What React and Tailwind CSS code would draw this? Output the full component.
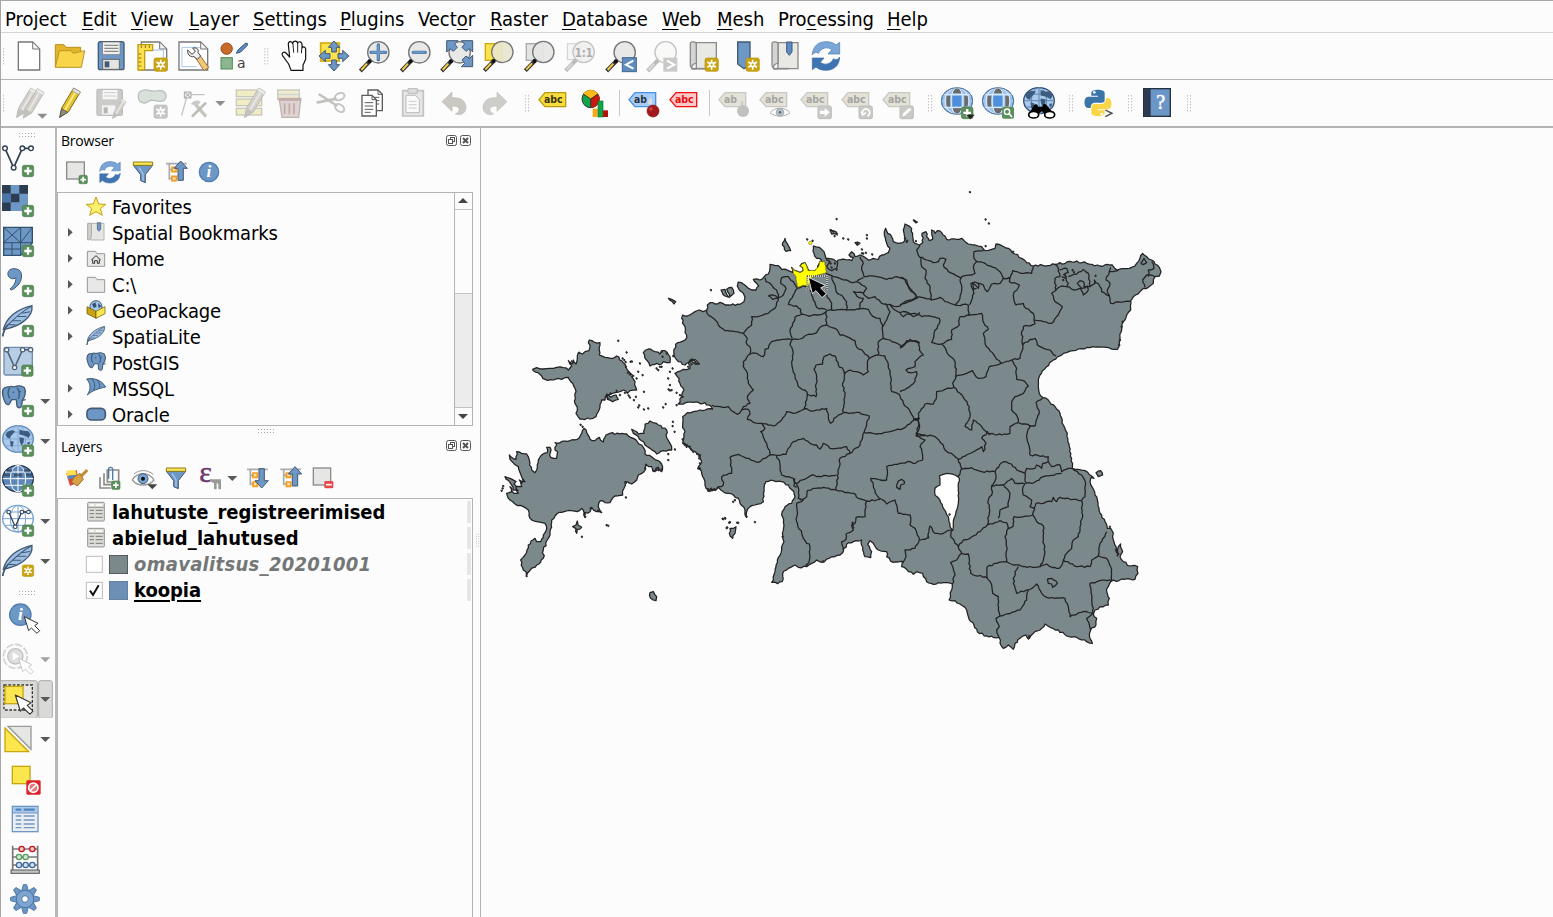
import React from "react";

const BLUE = "#6d97c4";
const NAVY = "#415a75";

/* ---------- shared drawing pieces (3 units = 1 px) ---------- */

function Cell({ x, y, w = 123, h = 141, children, className = "" }) {
  return (
    <svg className={`block shrink-0 ${className}`} width={w / 3} height={h / 3} viewBox={`${x} ${y} ${w} ${h}`}>
      {children}
    </svg>
  );
}
const Plus = ({ x, y, s = 36 }) => (
  <g transform={`translate(${x} ${y}) scale(${s / 36})`}>
    <rect x="1" y="1" width="34" height="34" rx="6" fill="#5b8f5b" stroke="#4a7d4c" strokeWidth="2" />
    <path d="M18 7V29M7 18H29" stroke="#fff" strokeWidth="7" />
  </g>
);
const Star = ({ x, y, s = 42, grey }) => (
  <g transform={`translate(${x} ${y}) scale(${s / 42})`}>
    <rect x="1" y="1" width="40" height="40" rx="6" fill={grey ? "#c6c6c4" : "#c9a413"} stroke={grey ? "#bbb" : "#b8940a"} strokeWidth="2" />
    <path d="M21 6V36M8 13L34 29M34 13L8 29" stroke="#fff" strokeWidth="5" />
    <circle cx="21" cy="21" r="8" fill="#fff" />
    <circle cx="21" cy="21" r="3.5" fill={grey ? "#c6c6c4" : "#c9a413"} />
  </g>
);
const Down = ({ x, y, c = "#595959" }) => <path d={`M${x - 15} ${y - 6}H${x + 15}L${x} ${y + 9}Z`} fill={c} />;
const Lens = ({ cx, cy, grey, fill = "#e6e6e4", children }) => (
  <g>
    <path d={`M${cx - 24} ${cy + 25}L${cx - 54} ${cy + 56}`} stroke={grey ? "#b9b9b9" : "#333"} strokeWidth="12" />
    <path d={`M${cx - 34} ${cy + 34}L${cx - 51} ${cy + 53}`} stroke={grey ? "#dcdcd8" : "#f5ce4a"} strokeWidth="6" />
    <circle cx={cx} cy={cy} r="32" fill={fill} fillOpacity=".9" stroke={grey ? "#c4c4c4" : "#777"} strokeWidth="4" />
    <circle cx={cx - 26} cy={cy + 27} r="6" fill={grey ? "#bbb" : "#111"} />
    {children}
  </g>
);
const Pointer = ({ x, y, s = 1, stroke = "#333", fill = "#fff" }) => (
  <path transform={`translate(${x} ${y}) scale(${s})`} d="M0 0L13 42L21 34L38 50L46 42L31 27L41 20Z" fill={fill} stroke={stroke} strokeWidth="3" strokeLinejoin="round" />
);
const Dots = ({ x, y, cols, rows }) => {
  const out = [];
  for (let i = 0; i < cols; i++) for (let j = 0; j < rows; j++) out.push(<rect key={`${i}-${j}`} x={x + i * 9} y={y + j * 9} width="3" height="3" fill="#a9a9a9" />);
  return <g>{out}</g>;
};
const Refresh = ({ x, y, s = 1 }) => (
  <g transform={`translate(${x} ${y}) scale(${s})`}>
    <path d="M-41 -3C-40 -30 -22 -43 0 -43C14 -43 24 -39 30 -33L41 -41V-6H6L17 -19C6 -29 -16 -25 -22 -8C-28 -12 -36 -12 -41 -3Z" fill="#79a6d6" stroke="#4677ac" strokeWidth="2" />
    <path d="M41 3C40 30 22 43 0 43C-14 43 -24 39 -30 33L-41 41V6H-6L-17 19C-6 29 16 25 22 8C28 12 36 12 41 3Z" fill="#3f74b2" stroke="#3a6aa2" strokeWidth="2" />
  </g>
);
const Globe = ({ cx, cy, rx = 46, ry = 40, dark, fill = "#a9c8ea", line = "#5b87b8" }) => (
  <g>
    <ellipse cx={cx} cy={cy} rx={rx} ry={ry} fill={fill} stroke={dark || line} strokeWidth="4" />
    <g fill="none" stroke={line} strokeWidth="3">
      <ellipse cx={cx} cy={cy} rx={rx * 0.5} ry={ry} />
      <path d={`M${cx} ${cy - ry}V${cy + ry}M${cx - rx} ${cy}H${cx + rx}M${cx - rx * 0.85} ${cy - ry * 0.5}H${cx + rx * 0.85}M${cx - rx * 0.85} ${cy + ry * 0.5}H${cx + rx * 0.85}`} />
    </g>
  </g>
);
const Continents = ({ cx, cy, s = 1 }) => (
  <g transform={`translate(${cx} ${cy}) scale(${s})`} fill="#3c5b80">
    <path d="M-36 -12L-30 -20L-20 -24L-8 -22L-14 -14L-20 -8L-24 0L-32 -4Z" />
    <path d="M-22 6L-12 9L-16 24L-21 20Z" />
    <path d="M4 -26L16 -22L28 -22L36 -12L30 -2L24 -6L14 -10L4 -12Z" />
    <path d="M4 -4L17 -2L16 10L10 20L5 8Z" />
    <path d="M27 10L35 9L32 17L27 17Z" />
  </g>
);
const WebGlobe = ({ cx }) => (
  <g>
    <ellipse cx={cx} cy="303" rx="47" ry="40" fill="#9dc3ee" stroke="#4f7db1" strokeWidth="3" />
    <path d={`M${cx - 8} 264H${cx + 8}L${cx + 14} 280H${cx - 14}ZM${cx - 14} 325H${cx + 14}L${cx + 6} 341H${cx - 6}ZM${cx - 32} 287H${cx - 20}V320H${cx - 32}ZM${cx + 22} 287H${cx + 34}V320H${cx + 22}Z`} fill="#6b6b6b" />
    <path d={`M${cx - 14} 287H${cx + 13}V320H${cx - 14}Z`} fill="#4d8fdc" />
    <g fill="none" stroke="#e2effc" strokeWidth="3">
      <ellipse cx={cx} cy="303" rx="18" ry="40" />
      <ellipse cx={cx} cy="303" rx="36" ry="40" />
      <path d={`M${cx - 42} 284H${cx + 42}M${cx - 42} 322H${cx + 42}`} />
    </g>
    <ellipse cx={cx} cy="303" rx="47" ry="40" fill="none" stroke="#5a7da3" strokeWidth="3" />
  </g>
);
const Tag = ({ x, fill, stroke, color, t = "abc" }) => (
  <g>
    <path d={`M${x} 299L${x + 18} 278H${x + 80}V320H${x + 18}Z`} fill={fill} stroke={stroke} strokeWidth="4" />
    <text x={x + 15} y="309" fontFamily="DejaVu Sans" fontWeight="bold" fontSize="29" textLength={t === "abc" ? 56 : 39} lengthAdjust="spacingAndGlyphs" fill={color}>{t}</text>
  </g>
);
const GreyTag = ({ x, t }) => <Tag x={x} t={t} fill="#e4e2d6" stroke="#c8c8c4" color="#a5a5a2" />;
const Feather = ({ x, y, s = 1 }) => (
  <g transform={`translate(${x} ${y}) scale(${s})`}>
    <path d="M6 72C10 54 18 42 34 28C52 14 72 6 90 2C92 18 84 34 68 46C54 58 34 66 16 70Z" fill="#9dbfe3" stroke={NAVY} strokeWidth="4" />
    <path d="M4 92C6 80 10 68 20 58C40 38 62 18 88 4M34 46L58 46M48 34L74 34M62 24L84 20M22 58L42 58" fill="none" stroke={NAVY} strokeWidth="3" />
    <path d="M4 92C6 80 10 68 20 58" fill="none" stroke={NAVY} strokeWidth="5" />
  </g>
);
const Elephant = ({ x, y, s = 1 }) => (
  <g transform={`translate(${x} ${y}) scale(${s})`} stroke={NAVY} strokeWidth="4" strokeLinejoin="round">
    <path d="M22 6C4 4 0 16 4 34C8 50 14 62 22 58C26 54 28 48 30 44H44L46 64C50 70 58 70 60 62L62 46C70 36 74 20 68 8C58 0 46 2 36 6C30 2 26 4 22 6Z" fill={BLUE} />
    <path d="M24 8C18 18 18 30 24 40M46 8C54 16 54 30 50 42M62 46L72 44M34 20L36 24M56 18V22" fill="none" />
  </g>
);
const Funnel = ({ x, y }) => (
  <g transform={`translate(${x} ${y})`}>
    <path d="M-29 -20H29L7 8V32L-7 26V8Z" fill={BLUE} stroke={NAVY} strokeWidth="3" />
    <path d="M-29 -30H29V-20H-29Z" fill="#fbe94e" stroke="#8a7a20" strokeWidth="3" />
    <path d="M-12 -14L0 6V26" stroke="#a8c6e6" strokeWidth="4" fill="none" />
  </g>
);
const TreeArrow = ({ x, y, up }) => (
  <g transform={`translate(${x} ${y})`}>
    <path d="M-32 -24H30M-22 -24V24M-22 -6H-12M-22 20H-12" stroke="#aaa" strokeWidth="5" fill="none" />
    <path d="M-14 -13H-1V0H-14ZM-14 14H-1V27H-14Z" fill="#ffe0b0" stroke="#f39a1b" strokeWidth="5" />
    <path transform={up ? "" : "scale(1 -1)"} d="M12 -32L32 -10H20V26H4V-10H-8Z" fill={BLUE} stroke={NAVY} strokeWidth="3" />
  </g>
);
const Info = ({ x, y, r = 29 }) => (
  <g>
    <circle cx={x} cy={y} r={r} fill={BLUE} stroke="#4d7db3" strokeWidth="4" />
    <text x={x} y={y + 16} textAnchor="middle" fontFamily="Liberation Serif" fontStyle="italic" fontWeight="bold" fontSize="52" fill="#fff">i</text>
  </g>
);
const Pencil = ({ x, y, grey, s = 1 }) => (
  <g transform={`translate(${x} ${y}) scale(${s})`}>
    <path d="M0 88L6 60L42 0L62 12L26 72Z" fill={grey ? "#d3d0cb" : "#e3c02c"} stroke={grey ? "#bdbab6" : "#7d6d24"} strokeWidth="3" />
    <path d="M16 66L50 8" stroke={grey ? "#e8e6e2" : "#fbea88"} strokeWidth="6" />
    <path d="M42 0L62 12L58 20L38 8Z" fill={grey ? "#eee" : "#e9e9e9"} stroke={grey ? "#c9c9c9" : "#888"} strokeWidth="2" />
    <path d="M0 88L6 62L24 73Z" fill={grey ? "#c4c2be" : "#8b8b80"} stroke={grey ? "#bbb" : "#444"} strokeWidth="2" />
  </g>
);

/* ---------- main toolbars ---------- */

const Page = ({ x, w = 64, fill = "#fff" }) => (
  <g>
    <path d={`M${x} 126H${x + w - 21}L${x + w} 147V210H${x}Z`} fill={fill} stroke="#777" strokeWidth="4" />
    <path d={`M${x + w - 21} 126V147H${x + w}Z`} fill="#f4f4f4" stroke="#777" strokeWidth="3" />
  </g>
);
const PaperRoll = ({ x, s = 1, y = 0 }) => (
  <g transform={`translate(${x} ${y}) scale(${s})`}>
    <path d="M18 128H78V206H18Z" fill="#e8e8e5" stroke="#8b8b8b" strokeWidth="4" />
    <path d="M0 130C0 124 18 124 18 132V190C10 190 4 196 4 206H18C8 210 0 204 0 196Z" fill="#d4d4d2" stroke="#8b8b8b" strokeWidth="4" />
    <path d="M4 206H50" stroke="#8b8b8b" strokeWidth="5" />
  </g>
);
const PanArrow = ({ r }) => <path transform={`translate(1002 168) rotate(${r})`} d="M-7 -12V-26H-17L0 -45L17 -26H7V-12Z" fill={BLUE} stroke={NAVY} strokeWidth="3" />;
const CornerArrow = ({ x, y, r }) => <path transform={`translate(${x} ${y}) rotate(${r})`} d="M-16 -16H18L8 -6L16 4L4 16L-6 8L-16 18Z" fill={BLUE} stroke={NAVY} strokeWidth="3" />;

function FileToolbar() {
  const c = { y: 99 };
  return (
    <div className="flex h-[47px] shrink-0 border-b border-[#b4b4b4]">
      <Cell {...c} x={3} w={24}><Dots x={9} y={145} cols={1} rows={6} /></Cell>
      <Cell {...c} x={27}><Page x={55} /></Cell>
      <Cell {...c} x={150}>
        <path d="M166 200V134H192L198 142H242V200Z" fill="#e3b52a" stroke="#b98f1c" strokeWidth="3" />
        <path d="M166 202L178 152H212L220 160L254 152L244 202Z" fill="#f9d549" stroke="#b9962b" strokeWidth="3" />
      </Cell>
      <Cell {...c} x={273}>
        <rect x="295" y="125" width="77" height="84" rx="6" fill={BLUE} stroke={NAVY} strokeWidth="4" />
        <rect x="308" y="126" width="52" height="38" fill="#efefed" stroke="#777" strokeWidth="2" />
        <path d="M313 136H355M313 145H355M313 154H355" stroke="#8a8a8a" strokeWidth="4" />
        <rect x="308" y="178" width="50" height="30" fill="#e4e4e2" stroke="#666" strokeWidth="3" />
        <rect x="314" y="184" width="14" height="18" fill={NAVY} />
      </Cell>
      <Cell {...c} x={396}>
        <Page x={424} w={76} /><path d="M458 150H490V180" stroke="#9fc1e8" strokeWidth="3" fill="none" />
        <path d="M414 134H458V152H434V210H414Z" fill="#fce14e" stroke="#c29b12" strokeWidth="4" />
        <path d="M424 136V144M436 136V144M448 136V144M416 162H424M416 174H424M416 186H424M416 198H424" stroke="#8a6c10" strokeWidth="3" />
        <Star x={461} y={173} />
      </Cell>
      <Cell {...c} x={519}>
        <Page x={537} w={86} /><path d="M546 142H600M546 142V200H590" stroke="#a9c8ea" strokeWidth="3" fill="none" />
        <path d="M586 172L612 212L626 202L598 164Z" fill="#f2c67a" stroke="#96722e" strokeWidth="3" />
        <path d="M563 150C561 162 570 172 582 170L592 178L602 168L594 158C598 146 588 142 578 144L586 154L576 163Z" fill="#f0f0f0" stroke="#444" strokeWidth="3" />
      </Cell>
      <Cell {...c} x={642}>
        <circle cx="680" cy="146" r="17" fill="#cb6a28" stroke="#8f4a1c" strokeWidth="3" />
        <rect x="663" y="173" width="34" height="34" fill="#8db58f" stroke="#4d8a56" strokeWidth="3" />
        <path d="M709 160L714 150L736 130H742V136L722 156Z" fill="#5b8cc5" stroke="#34557c" strokeWidth="3" />
        <text x="711" y="203" fontFamily="DejaVu Sans" fontSize="42" fill="#444">a</text>
      </Cell>
      <Cell {...c} x={765} w={54}><Dots x={793} y={145} cols={2} rows={6} /></Cell>
      <Cell {...c} x={819}>
        <path d="M873 211L866 192L847 166C844 158 852 153 858 159L869 171L865 133C865 123 876 122 878 131C880 121 892 121 893 130C896 122 906 125 906 134L907 143C911 138 918 142 917 149V178L909 196V211Z" fill="#fff" stroke="#111" strokeWidth="3.6" strokeLinejoin="round" />
        <path d="M879 132L881 158M893 132V158M906 140L904 160" fill="none" stroke="#222" strokeWidth="3" />
      </Cell>
      <Cell {...c} x={942}>
        <rect x="962" y="129" width="56" height="54" fill="#fbe34b" stroke="#d6ab10" strokeWidth="5" />
        {[0, 90, 180, 270].map((r) => <PanArrow key={r} r={r} />)}
      </Cell>
      <Cell {...c} x={1065}><Lens cx={1135} cy={157}><path d="M1135 135V179M1113 157H1157" stroke="#4f7aab" strokeWidth="10" strokeLinecap="round" /><path d="M1135 136V178M1114 157H1156" stroke={BLUE} strokeWidth="6" /></Lens></Cell>
      <Cell {...c} x={1188}><Lens cx={1258} cy={157}><path d="M1240 157H1276" stroke="#4f7aab" strokeWidth="10" strokeLinecap="round" /><path d="M1240 157H1276" stroke={BLUE} strokeWidth="6" /></Lens></Cell>
      <Cell {...c} x={1311}>
        <Lens cx={1379} cy={157} />
        <CornerArrow x={1356} y={138} r={0} /><CornerArrow x={1402} y={138} r={90} /><CornerArrow x={1402} y={184} r={180} />
      </Cell>
      <Cell {...c} x={114}><rect x="136" y="131" width="50" height="50" fill="#fbe34b" stroke="#d0a812" strokeWidth="4" /><Lens cx={187} cy={156} fill="#e8e6cf" /></Cell>
      <Cell {...c} x={237}><rect x="259" y="131" width="50" height="50" fill="#e3e5e2" stroke="#aaa" strokeWidth="4" /><Lens cx={310} cy={156} /></Cell>
      <Cell {...c} x={360}>
        <rect x="382" y="131" width="40" height="48" fill="#f5f5f5" stroke="#d0d0d0" strokeWidth="3" /><Lens cx={431} cy={156} grey fill="#f0f0ee" />
        <text x="404" y="170" fontFamily="DejaVu Sans" fontWeight="bold" fontSize="36" textLength="54" lengthAdjust="spacingAndGlyphs" fill="#ababab">1:1</text>
      </Cell>
      <Cell {...c} x={483}><Lens cx={554} cy={157} /><rect x="547" y="173" width="42" height="42" fill="#5f8cbd" stroke="#43688f" strokeWidth="3" /><path d="M580 182L558 194L580 206" stroke="#fff" strokeWidth="6" fill="none" /></Cell>
      <Cell {...c} x={606}><Lens cx={677} cy={157} grey fill="#f8f8f7" /><rect x="670" y="173" width="42" height="42" fill="#c9c9c7" /><path d="M681 182L703 194L681 206" stroke="#fff" strokeWidth="6" fill="none" /></Cell>
      <Cell {...c} x={729}><PaperRoll x={751} /><Star x={794} y={173} /></Cell>
      <Cell {...c} x={852}><path d="M893 126H930V194L912 206L893 192Z" fill={BLUE} stroke={NAVY} strokeWidth="4" /><Star x={917} y={173} /></Cell>
      <Cell {...c} x={975}><PaperRoll x={996} /><path d="M1040 126H1056V156L1048 166L1040 156Z" fill="#5a8bc4" stroke={NAVY} strokeWidth="3" /></Cell>
      <Cell {...c} x={1098}><Refresh x={1158} y={168} /></Cell>
    </div>
  );
}

const Doc = ({ x, y }) => (
  <g>
    <path d={`M${x} ${y}H${x + 30}L${x + 43} ${y + 13}V${y + 62}H${x}Z`} fill="#fff" stroke="#5c5c5c" strokeWidth="4" />
    <path d={`M${x + 30} ${y}V${y + 13}H${x + 43}M${x + 8} ${y + 22}H${x + 34}M${x + 8} ${y + 32}H${x + 34}M${x + 8} ${y + 42}H${x + 34}M${x + 8} ${y + 51}H${x + 26}`} fill="none" stroke="#5c5c5c" strokeWidth="3" />
  </g>
);
const Badge = ({ x, children }) => (
  <g><rect x={x} y="318" width="40" height="38" rx="5" fill="#c9c9c7" stroke="#bcbcba" strokeWidth="3" />{children}</g>
);

function EditToolbar() {
  const c = { y: 240 };
  return (
    <div className="flex h-[48px] shrink-0 overflow-hidden border-b-2 border-[#b4b4b4]">
      <Cell {...c} x={3} w={24}><Dots x={9} y={286} cols={1} rows={6} /></Cell>
      <Cell {...c} x={27}><Pencil x={50} y={264} grey /><Pencil x={70} y={266} grey /><Down x={127} y={347} c="#8d8d8d" /></Cell>
      <Cell {...c} x={150}><Pencil x={179} y={264} /></Cell>
      <Cell {...c} x={273}>
        <rect x="291" y="268" width="76" height="78" rx="5" fill="#cbcbc9" stroke="#bdbdbb" strokeWidth="4" />
        <rect x="308" y="270" width="44" height="28" fill="#f7f7f7" /><path d="M312 278H348M312 288H348" stroke="#ccc" strokeWidth="3" />
        <rect x="306" y="316" width="40" height="28" fill="#f4f4f4" /><rect x="311" y="322" width="12" height="18" fill="#b5b5b5" />
        <Pencil x={338} y={298} s={0.65} grey />
      </Cell>
      <Cell {...c} x={396}>
        <path d="M415 292C412 272 432 266 450 272C468 278 476 266 490 274C504 284 500 304 480 304C462 304 456 296 446 304C434 314 416 308 415 292Z" fill="#d9e0da" stroke="#bcc0bc" strokeWidth="4" />
        <Star x={461} y={314} grey />
      </Cell>
      <Cell {...c} x={519} w={174}>
        <path d="M545 346L562 284H614" fill="none" stroke="#c4c4c2" strokeWidth="4" />
        <path d="M553 276H573V294H553ZM553 276L573 294M573 276L553 294" fill="#eee" stroke="#a9a9a7" strokeWidth="3" />
        <path d="M584 310L618 350" stroke="#c8c6c0" strokeWidth="10" /><path d="M618 308L576 350" stroke="#bdbbb6" strokeWidth="8" /><path d="M572 312C584 298 596 300 602 306L592 318Z" fill="#c9c9c9" />
        <Down x={661} y={309} c="#8d8d8d" />
      </Cell>
      <Cell {...c} x={693}>
        {[270, 297, 325].map((y) => <rect key={y} x="709" y={y} width="76" height="20" fill="#efecc6" stroke="#c9c8b8" strokeWidth="4" />)}
        <Pencil x={734} y={264} grey />
      </Cell>
      <Cell {...c} x={816}>
        <path d="M833 270H898V298H833Z" fill="#ece9d0" stroke="#cccabc" strokeWidth="4" /><path d="M833 284H898" stroke="#ccc" strokeWidth="3" />
        <path d="M838 298H902L896 352H846Z" fill="#dfd3d1" stroke="#bfb3b1" strokeWidth="4" /><path d="M836 298H904" stroke="#c0aeac" strokeWidth="9" />
        <path d="M854 310V342M868 310V342M882 310V342" stroke="#c0aaa8" strokeWidth="5" />
      </Cell>
      <Cell {...c} x={939}>
        <path d="M956 282L1012 318M950 308L1010 296" stroke="#c2c2c0" strokeWidth="8" />
        <ellipse cx="1019" cy="290" rx="15" ry="10" transform="rotate(-25 1019 290)" fill="none" stroke="#c2c2c0" strokeWidth="6" />
        <ellipse cx="1019" cy="324" rx="15" ry="10" transform="rotate(35 1019 324)" fill="none" stroke="#c2c2c0" strokeWidth="6" />
      </Cell>
      <Cell {...c} x={1062}><Doc x={1104} y={270} /><Doc x={1086} y={286} /></Cell>
      <Cell {...c} x={1185}>
        <path d="M1208 272H1270V348H1208Z" fill="#e7e7e5" stroke="#c2c2c0" strokeWidth="5" /><path d="M1224 266H1252V280H1224Z" fill="#ddd" stroke="#bbb" strokeWidth="3" />
        <path d="M1218 286H1246L1258 298V338H1218Z" fill="#fafafa" stroke="#bbb" strokeWidth="3" /><path d="M1226 304H1250M1226 314H1250M1226 324H1250" stroke="#ccc" strokeWidth="3" />
      </Cell>
      <Cell {...c} x={1308}><path d="M1326 305L1356 276V294C1384 290 1398 306 1398 322C1398 334 1390 344 1376 344L1366 342C1386 332 1378 316 1356 318V334Z" fill="#cbc8c4" stroke="#bdbab6" strokeWidth="2" /></Cell>
      <Cell {...c} x={111}><path d="M201 305L171 276V294C143 290 129 306 129 322C129 334 137 344 151 344L161 342C141 332 149 316 171 318V334Z" fill="#cbcec9" stroke="#bcc0ba" strokeWidth="2" /></Cell>
      <Cell {...c} x={234} w={48}><Dots x={255} y={286} cols={2} rows={6} /></Cell>
      <Cell {...c} x={282}><Tag x={297} fill="#f6dc3c" stroke="#b99a10" color="#3c3413" /></Cell>
      <Cell {...c} x={405}>
        <circle cx="452" cy="297" r="26" fill="#10a54a" stroke="#333" strokeWidth="3" />
        <path d="M452 297L430 282A26 26 0 0 1 474 282Z" fill="#f9b916" /><path d="M452 297L474 282A26 26 0 0 1 454 323Z" fill="#c8170d" />
        <path d="M452 297L430 282M452 297L474 282M452 297V323" stroke="#333" strokeWidth="3" />
        <rect x="458" y="326" width="15" height="25" fill="#f9a916" /><rect x="474" y="303" width="15" height="48" fill="#10a54a" stroke="#0a7a35" strokeWidth="2" /><rect x="489" y="331" width="15" height="20" fill="#b5120b" />
      </Cell>
      <div className="mx-[3px] my-[10px] w-px bg-[#c8c8c8]" />
      <Cell {...c} x={549}>
        <Tag x={567} t="ab" fill="#a6cdf7" stroke="#4a90e2" color="#2a3440" />
        <path d="M634 318V302C634 296 629 296 628 304V312" stroke="#ddd" strokeWidth="6" fill="none" /><circle cx="639" cy="333" r="18" fill="#a3181a" stroke="#781214" strokeWidth="2" /><circle cx="633" cy="327" r="5" fill="#c9494a" />
      </Cell>
      <Cell {...c} x={672}><Tag x={690} fill="#fbc9c9" stroke="#f60d0d" color="#e80c0c" /></Cell>
      <div className="ml-[4px] mr-[5px] my-[10px] w-px bg-[#c8c8c8]" />
      <Cell {...c} x={825}><GreyTag x={837} t="ab" /><path d="M906 318V302" stroke="#ccc" strokeWidth="6" /><circle cx="909" cy="333" r="18" fill="#c0c0be" /></Cell>
      <Cell {...c} x={948}><GreyTag x={960} /><path d="M990 338C1005 320 1035 320 1050 338C1035 352 1005 352 990 338Z" fill="#fbfbfb" stroke="#adadad" strokeWidth="3" /><circle cx="1020" cy="337" r="11" fill="#b9c4d0" stroke="#9aa5b0" strokeWidth="3" /><circle cx="1020" cy="337" r="4" fill="#666" /></Cell>
      <Cell {...c} x={1071}><GreyTag x={1083} /><Badge x={1134}><path d="M1140 332H1154V324L1169 337L1154 350V342H1140Z" fill="#fff" /></Badge></Cell>
      <Cell {...c} x={1194}><GreyTag x={1206} /><Badge x={1257}><path d="M1268 342A11 11 0 1 1 1282 348M1264 334L1268 344L1278 338" fill="none" stroke="#fff" strokeWidth="5" /></Badge></Cell>
      <Cell {...c} x={1317}><GreyTag x={1329} /><Badge x={1380}><path d="M1387 350L1390 340L1408 323L1414 329L1396 346Z" fill="#fff" /></Badge></Cell>
      <Cell {...c} x={180} w={51}><Dots x={204} y={286} cols={2} rows={6} /></Cell>
      <Cell {...c} x={231}><WebGlobe cx={291} /><Plus x={303} y={320} s={37} /><path d="M318 344H344L331 358Z" fill="#222" /></Cell>
      <Cell {...c} x={354}><WebGlobe cx={414} /><rect x="426" y="320" width="36" height="36" rx="5" fill="#5b8f5b" /><circle cx="441" cy="335" r="8" fill="none" stroke="#fff" strokeWidth="4" /><path d="M447 341L456 351" stroke="#fff" strokeWidth="5" /></Cell>
      <Cell {...c} x={477}>
        <Globe cx={537} cy={302} rx={46} ry={39} dark="#2b4a70" line="#5f87b3" /><Continents cx={537} cy={300} s={1.15} />
        <path d="M506 344L520 318C524 310 534 312 534 320H548C548 310 556 310 562 318L584 344L566 352L545 334L525 352Z" fill="#000" />
        <ellipse cx="521" cy="344" rx="15" ry="10" fill="#fff" stroke="#000" strokeWidth="5" /><ellipse cx="569" cy="344" rx="15" ry="10" fill="#fff" stroke="#000" strokeWidth="5" />
      </Cell>
      <Cell {...c} x={600} w={54}><Dots x={627} y={286} cols={2} rows={6} /></Cell>
      <Cell {...c} x={654}>
        <path d="M694 290V278C694 266 734 266 734 278V300C734 308 728 308 724 308H706C696 308 692 314 692 324H684C670 324 670 290 684 290H714V287H694Z" fill="#3a74a9" />
        <path d="M734 328V340C734 352 694 352 694 340V322C694 314 698 312 704 312H724C734 312 738 304 738 294H744C758 294 758 328 744 328H714V331H734Z" fill="#f9d648" />
        <circle cx="703" cy="277" r="4" fill="#fff" /><circle cx="725" cy="342" r="4" fill="#fff" /><path d="M736 330L756 340L736 350" fill="none" stroke="#444" strokeWidth="4" />
      </Cell>
      <Cell {...c} x={777} w={54}><Dots x={804} y={286} cols={2} rows={6} /></Cell>
      <Cell {...c} x={831}>
        <rect x="851" y="266" width="80" height="83" fill="#6b97c8" stroke="#26303f" strokeWidth="4" /><rect x="852" y="267" width="20" height="81" fill="#2d3a4f" />
        <text x="902" y="328" textAnchor="middle" fontFamily="Liberation Serif" fontSize="60" fill="#fff" stroke="#fff" strokeWidth="1.5">?</text>
      </Cell>
      <Cell {...c} x={954} w={54}><Dots x={981} y={286} cols={2} rows={6} /></Cell>
    </div>
  );
}

/* ---------- left tool column ---------- */

const VShape = ({ x, y, s = 1, c = "#2f3e50" }) => (
  <g transform={`translate(${x} ${y}) scale(${s})`} stroke={c} fill="none">
    <path d="M0 0L26 58L52 0H78" strokeWidth="5" />
    <g fill="#fff" strokeWidth="4"><circle r="7" /><circle cx="26" cy="58" r="7" /><circle cx="52" r="7" /><circle cx="78" r="7" /></g>
  </g>
);

function SideToolbar() {
  const c = { x: 3, w: 162, h: 120 };
  return (
    <div className="flex w-[56px] shrink-0 flex-col border-r-2 border-[#b9b9b9]">
      <Cell x={3} y={9} w={162} h={36}><Dots x={57} y={24} cols={6} rows={2} /></Cell>
      <Cell {...c} y={45}><VShape x={15} y={70} /><Plus x={66} y={120} /></Cell>
      <Cell {...c} y={165}>
        <path d="M6 180H84V258H6Z" fill={BLUE} />
        <path d="M6 180H32V206H6ZM58 180H84V206H58ZM32 206H58V232H32ZM6 232H32V258H6Z" fill="#2c3d52" /><path d="M6 206H32V232H6Z" fill="#4a76a8" />
        <Plus x={66} y={240} />
      </Cell>
      <Cell {...c} y={285}>
        <path d="M11 307H97V354L62 391H11Z" fill={BLUE} stroke="#33506f" strokeWidth="4" />
        <path d="M11 353H97M62 307V391M11 307L62 353M62 307L11 353M97 307L62 353M11 372H62M36 353V391" stroke="#33506f" strokeWidth="3" /><Plus x={66} y={360} />
      </Cell>
      <Cell {...c} y={405}><path d="M42 431C28 431 22 440 24 450C26 462 42 464 48 458C48 472 40 484 30 492L34 495C56 486 68 464 64 446C62 436 54 431 42 431Z" fill={BLUE} stroke={NAVY} strokeWidth="3" /><Plus x={66} y={480} /></Cell>
      <Cell {...c} y={525}><Feather x={4} y={540} s={1.02} /><Plus x={66} y={600} /></Cell>
      <Cell {...c} y={645}><rect x="12" y="667" width="85" height="83" rx="5" fill="#b6cde4" stroke="#6f8caa" strokeWidth="4" /><VShape x={20} y={674} s={0.92} c="#4c6078" /><Plus x={64} y={719} /></Cell>
      <Cell {...c} y={765}><Elephant x={5} y={780} /><Plus x={66} y={840} /><Down x={136} y={828} /></Cell>
      <Cell {...c} y={0}><Globe cx={54} cy={57} line="#86abd3" dark="#5b87b8" /><Continents cx={54} cy={56} s={1.05} /><Plus x={66} y={74} /><Down x={136} y={63} /></Cell>
      <Cell {...c} y={120}><Globe cx={54} cy={176} fill="#5d88b8" line="#fff" dark="#22374f" /><path d="M12 165H30M42 165H66M78 165H96M20 152H36M72 152H90" stroke="#22374f" strokeWidth="9" opacity=".6" /><Plus x={66} y={194} /></Cell>
      <Cell {...c} y={240}><Globe cx={54} cy={296} fill="#fff" line="#77a2d0" /><VShape x={26} y={276} s={0.76} /><Plus x={66} y={314} /><Down x={136} y={303} /></Cell>
      <Cell {...c} y={360}><Feather x={4} y={374} s={1.02} /><Star x={66} y={434} s={36} /><Down x={136} y={423} /></Cell>
      <Cell x={3} y={0} w={162} h={54}><Dots x={57} y={33} cols={6} rows={2} /></Cell>
      <Cell {...c} y={54}><Info x={61} y={104} r={32} /><Pointer x={73} y={110} /></Cell>
      <Cell {...c} y={174}>
        <circle cx="46" cy="229" r="36" fill="#fafafa" stroke="#d0d0d0" strokeWidth="5" strokeDasharray="22 6" /><circle cx="46" cy="229" r="23" fill="#dedede" stroke="#c2c2c2" strokeWidth="4" />
        <path d="M38 217V241L58 229Z" fill="#fff" /><Pointer x={56} y={235} s={0.95} stroke="#c6c6c6" /><Down x={136} y={238} c="#a3a3a3" />
      </Cell>
      <Cell {...c} y={294}>
        <rect x="-6" y="302" width="118" height="113" rx="6" fill="#d9d9d7" stroke="#a8a8a8" strokeWidth="3" /><rect x="116" y="302" width="41" height="113" rx="6" fill="#d9d9d7" stroke="#a8a8a8" strokeWidth="3" />
        <rect x="12" y="315" width="85" height="75" fill="#e8e8e6" stroke="#333" strokeWidth="4" strokeDasharray="8 5" /><rect x="15" y="319" width="54" height="52" fill="#fbe64d" stroke="#c9a413" strokeWidth="4" />
        <Pointer x={46} y={345} s={1.15} /><Down x={136} y={357} />
      </Cell>
      <Cell {...c} y={414}><path d="M24 439H93V508Z" fill="#e6e6e4" stroke="#9a9a98" strokeWidth="4" /><path d="M15 444L86 515H15Z" fill="#fbe64d" stroke="#c9a413" strokeWidth="4" /><Down x={136} y={477} /></Cell>
      <Cell {...c} y={534}>
        <rect x="37" y="559" width="53" height="52" fill="#fbe64d" stroke="#c9a413" strokeWidth="4" /><rect x="79" y="601" width="43" height="43" rx="4" fill="#dd2229" />
        <circle cx="100" cy="623" r="14" fill="#e87579" stroke="#fff" strokeWidth="5" /><path d="M91 632L110 613" stroke="#fff" strokeWidth="5" />
      </Cell>
      <Cell {...c} y={654}>
        <rect x="37" y="679" width="77" height="76" fill="#eceef0" stroke={BLUE} strokeWidth="4" /><path d="M39 681H112V699H39Z" fill="#a9c8ea" /><path d="M47 689H64M71 689H104" stroke="#4f83ba" strokeWidth="7" /><path d="M37 699H114" stroke={BLUE} strokeWidth="3" />
        <path d="M47 708H64M71 708H104M47 720H64M71 720H104M47 732H64M71 732H104M47 743H64M71 743H104" stroke={BLUE} strokeWidth="4" />
      </Cell>
      <Cell {...c} y={774}>
        <path d="M38 797V872M113 797V872M38 807H113M38 831H113M38 855H113" stroke="#777" strokeWidth="5" /><rect x="33" y="870" width="85" height="10" fill="#c4c4c4" stroke="#555" strokeWidth="3" />
        <g strokeWidth="4"><g fill="#f8c5c5" stroke="#c2181d"><circle cx="65" cy="807" r="8" /><circle cx="97" cy="807" r="8" /></g><g fill="#cfe6cf" stroke="#5c9c60"><circle cx="57" cy="831" r="8" /><circle cx="77" cy="831" r="8" /></g><g fill="#cfe0f2" stroke="#3f6899"><circle cx="57" cy="855" r="8" /><circle cx="77" cy="855" r="8" /><circle cx="97" cy="855" r="8" /></g></g>
      </Cell>
      <Cell {...c} y={894} h={117}>
        <g transform="translate(75 957)">{[0, 45, 90, 135, 180, 225, 270, 315].map((r) => <path key={r} transform={`rotate(${r})`} d="M-10 -24L-5 -43H5L10 -24Z" fill={BLUE} stroke="#4d79ab" strokeWidth="3" />)}</g>
        <circle cx="75" cy="957" r="26" fill="#7ea5d0" stroke="#4d79ab" strokeWidth="3" /><circle cx="75" cy="957" r="10" fill="#fff" stroke="#4d79ab" strokeWidth="3" />
      </Cell>
    </div>
  );
}

/* ---------- docks ---------- */

const DockButtons = () => (
  <svg className="block" width="26" height="12" viewBox="0 0 26 12" fill="none" stroke="#555">
    <rect x=".5" y=".5" width="10" height="10" rx="2" /><rect x="4.5" y="2.5" width="4" height="4" /><rect x="2.5" y="4.5" width="4" height="4" fill="#fcfcfc" />
    <rect x="14.5" y=".5" width="10" height="10" rx="2" /><path d="M17 3L22 8M22 3L17 8" strokeWidth="2" />
  </svg>
);

const Roll = ({ y }) => (
  <g><path d={`M272 ${y - 26}H312V${y + 24}H272Z`} fill="#e6e6e4" stroke="#b5b5b3" strokeWidth="3" /><path d={`M263 ${y - 26}H274V${y + 14}L266 ${y + 24}H263Z`} fill="#cfcfcd" stroke="#a9a9a7" strokeWidth="3" /><path d={`M292 ${y - 28}H302V${y - 8}L297 ${y - 2}L292 ${y - 8}Z`} fill={BLUE} stroke={NAVY} strokeWidth="2" /></g>
);
const Folder = ({ y, children }) => <g><path d={`M262 ${y - 22}H286L291 ${y - 15}H314V${y + 23}H262Z`} fill="#e8e8e6" stroke="#979795" strokeWidth="3" />{children}</g>;

const SOURCES = [
  { name: "Favorites", leaf: true, icon: <path d="M288 216L296 237L317 238L301 251L307 271L288 260L269 271L275 251L259 238L280 237Z" fill="#fdf06a" stroke="#c2a21a" strokeWidth="3" /> },
  { name: "Spatial Bookmarks", icon: <Roll y={321} /> },
  { name: "Home", icon: <Folder y={401}><path d="M274 405L288 392L302 405M278 403V415H284V407H292V415H298V403" fill="none" stroke="#333" strokeWidth="3" /></Folder> },
  { name: "C:\\", icon: <Folder y={479} /> },
  { name: "GeoPackage", icon: <g><circle cx="288" cy="545" r="18" fill="#a6c6ea" stroke="#33506f" strokeWidth="3" /><path d="M276 538L286 532L290 544L282 550ZM294 534L304 544L296 550Z" fill="#33506f" /><path d="M261 545L288 559V580L261 566Z" fill="#c9a40e" stroke="#5c4c0a" strokeWidth="2" /><path d="M315 545L288 559V580L315 566Z" fill="#fbe64d" stroke="#5c4c0a" strokeWidth="2" /></g> },
  { name: "SpatiaLite", icon: <Feather x={258} y={603} s={0.62} /> },
  { name: "PostGIS", leaf: true, icon: <Elephant x={259} y={681} s={0.8} /> },
  { name: "MSSQL", icon: <g><path d="M260 762C280 758 304 764 317 786C298 790 276 796 262 810C274 792 272 776 260 762Z" fill={BLUE} stroke={NAVY} strokeWidth="3" /><path d="M276 762C286 774 286 786 280 796M292 766C300 776 300 784 296 790" fill="none" stroke={NAVY} strokeWidth="3" /></g> },
  { name: "Oracle", icon: <rect x="261" y="850" width="55" height="35" rx="13" fill={BLUE} stroke={NAVY} strokeWidth="5" /> },
];

const TREE_FONT = "font-['DejaVu_Sans_Condensed','DejaVu_Sans',sans-serif] [font-stretch:semi-condensed]";

function BrowserDock() {
  const c = { y: 84, h: 117, w: 99 };
  return (
    <section className="flex h-[298px] flex-col">
      <header className="flex h-[25px] items-center justify-between pl-[4px] pr-[1px]">
        <h2 className="font-['Open_Sans',sans-serif] text-[14px] tracking-[-0.2px]">Browser</h2>
        <DockButtons />
      </header>
      <div className="flex h-[39px] pl-[3px]">
        <Cell {...c} x={180}><rect x="200" y="111" width="53" height="51" fill="#e6e6e4" stroke="#8b8b89" strokeWidth="4" /><Plus x={236} y={150} s={27} /></Cell>
        <Cell {...c} x={279}><Refresh x={330} y={142} s={0.75} /></Cell>
        <Cell {...c} x={378} w={102}><Funnel x={429} y={141} /></Cell>
        <Cell {...c} x={480}><TreeArrow x={530} y={140} up /></Cell>
        <Cell {...c} x={579}><Info x={627} y={141} /></Cell>
      </div>
      <div className="flex h-[234px] w-[416px] overflow-hidden border border-[#b4b4b4]">
        <ul className="flex-1 overflow-hidden pt-px">
          {SOURCES.map((s, i) => (
            <li key={s.name} className="flex h-[26px] items-center">
              <Cell x={174} y={207 + 78 * i} w={162} h={78}>
                {!s.leaf && <path d={`M204 ${231 + 78 * i}V${257 + 78 * i}L218 ${244 + 78 * i}Z`} fill="#595959" />}
                {s.icon}
              </Cell>
              <span className={`${TREE_FONT} whitespace-pre text-[20px] leading-[18px] tracking-[-0.15px]`}>{s.name}</span>
            </li>
          ))}
        </ul>
        <div className="flex w-[18px] flex-col border-l border-[#b4b4b4]">
          <svg className="block h-[16px]" viewBox="0 0 17 16"><path d="M8 5L13 10H3Z" fill="#444" /></svg>
          <div className="h-[85px] border-y border-[#c2c2c2] bg-[#fcfcfc]" />
          <div className="flex-1 bg-[#ececec]" />
          <svg className="block h-[18px] border-t border-[#c2c2c2]" viewBox="0 0 17 17"><path d="M8 11L13 6H3Z" fill="#444" /></svg>
        </div>
      </div>
    </section>
  );
}

const TableIcon = ({ y }) => (
  <g><rect x="263" y={y - 28} width="50" height="56" rx="3" fill="#deddd9" stroke="#93938f" strokeWidth="3" /><path d={`M268 ${y - 20}H282M287 ${y - 20}H308`} stroke="#fff" strokeWidth="5" /><path d={`M263 ${y - 13}H313`} stroke="#93938f" strokeWidth="3" />
    <path d={`M269 ${y - 4}H282M287 ${y - 4}H308M269 ${y + 6}H282M287 ${y + 6}H308M269 ${y + 17}H282M287 ${y + 17}H308`} stroke="#8a8a86" strokeWidth="4" /></g>
);
const CheckBox = ({ y, on }) => (
  <g><rect x="259" y={y - 24} width="48" height="48" fill="#fff" stroke="#bcbcbc" strokeWidth="3" />{on && <path d={`M270 ${y + 1}L279 ${y + 14}L296 ${y - 15}`} fill="none" stroke="#111" strokeWidth="6" />}</g>
);

const LAYERS = [
  { name: "lahutuste_registreerimised", icon: <TableIcon y={275} />, cls: "font-bold tracking-[-0.04px] text-black" },
  { name: "abielud_lahutused", icon: <TableIcon y={353} />, cls: "font-bold tracking-[0.08px] text-black" },
  { name: "omavalitsus_20201001", wide: true, icon: <g><CheckBox y={433} /><rect x="328" y="406" width="55" height="55" fill="#7c898c" stroke="#333" strokeWidth="2" /></g>, cls: "font-bold italic tracking-[0.3px] text-[#737777]" },
  { name: "koopia", wide: true, icon: <g><CheckBox y={511} on /><rect x="328" y="484" width="55" height="55" fill="#6c8fb6" stroke="#4d6a8c" strokeWidth="2" /></g>, cls: "font-bold tracking-[-0.05px] text-black underline decoration-2 underline-offset-[3px]" },
];

function LayersDock() {
  const c = { y: 120, h: 114, w: 99 };
  return (
    <section className="flex flex-1 flex-col">
      <svg className="ml-[201px] block shrink-0" width="18" height="8" viewBox="0 0 54 24"><Dots x={0} y={9} cols={6} rows={2} /></svg>
      <header className="flex h-[26px] items-center justify-between pb-px pl-[4px] pr-[1px]">
        <h2 className="font-['Open_Sans',sans-serif] text-[14px] tracking-[-0.2px]">Layers</h2>
        <div className="pb-[2px]"><DockButtons /></div>
      </header>
      <div className="flex h-[38px] pl-[3px]">
        <Cell {...c} x={180}><path d="M199 160L230 150L236 186L210 198Z" fill="#e8413c" /><path d="M199 152L226 150L230 164L202 168Z" fill="#fbe14d" /><path d="M202 168L228 164L230 174L204 178Z" fill="#5c86b8" /><path d="M222 172L240 160L250 178L232 198L214 186Z" fill="#d9a242" stroke="#96722e" strokeWidth="3" /><path d="M242 170L262 150" stroke="#c58a34" strokeWidth="9" /></Cell>
        <Cell {...c} x={279}><path d="M300 172V204H332M312 160V194H340M322 150H356V186H322Z" fill="none" stroke="#8b8b89" strokeWidth="5" /><path d="M326 176V148C326 140 338 140 338 148V180" fill="none" stroke="#4f79a8" strokeWidth="4" /><Plus x={334} y={182} s={27} /></Cell>
        <Cell {...c} x={378} w={102}><path d="M397 180C412 155 446 155 462 180C446 200 412 200 397 180Z" fill="#fff" stroke="#999" strokeWidth="4" /><path d="M402 162C418 148 444 148 460 164" fill="none" stroke="#999" strokeWidth="3" /><circle cx="429" cy="176" r="15" fill="#7aa3d2" stroke={NAVY} strokeWidth="3" /><circle cx="429" cy="176" r="6" fill="#111" /><Down x={457} y={199} c="#444" /></Cell>
        <Cell {...c} x={480}><Funnel x={528} y={174} /></Cell>
        <Cell {...c} x={579} w={144}><text x="598" y="185" fontFamily="Liberation Serif" fontSize="90" fill="#6a3a6e" stroke="#6a3a6e" strokeWidth="1.5">ε</text><path d="M630 178H663V208H655V192L650 188V208H642V190L630 184Z" fill="#9a9a98" /><Down x={697} y={174} /></Cell>
        <Cell {...c} x={723}><TreeArrow x={773} y={172} /></Cell>
        <Cell {...c} x={822}><TreeArrow x={873} y={172} up /></Cell>
        <Cell {...c} x={921}><rect x="940" y="144" width="52" height="51" fill="#e6e6e4" stroke="#8b8b89" strokeWidth="4" /><rect x="973" y="183" width="27" height="22" rx="4" fill="#e8474b" /><path d="M978 194H995" stroke="#fff" strokeWidth="5" /></Cell>
      </div>
      <ul className="w-[416px] flex-1 border border-b-0 border-[#b4b4b4]">
        {LAYERS.map((l, i) => (
          <li key={l.name} className="flex h-[26px] items-center pr-px">
            <Cell x={174} y={237 + 78 * i} w={l.wide ? 228 : 162} h={78}>{l.icon}</Cell>
            <span className={`flex-1 whitespace-nowrap pt-px text-[20px] leading-[25px] ${TREE_FONT} ${l.cls}`}>{l.name}</span>
            <span className="h-[22px] w-[4px] bg-[#e6e6e6]" />
          </li>
        ))}
      </ul>
    </section>
  );
}

/* ---------- map ---------- */

const noise = (n) => {
  const v = Math.sin(n * 12.9898) * 43758.5453;
  return v - Math.floor(v) - 0.5;
};
const parse = (s) => s.trim().split(/\s+/).map((p) => p.split(",").map(Number));
const shift = (ox, oy, s) => parse(s).map(([x, y]) => [ox * 3 + x, oy * 3 + y]);
const rough = (pts, amp = 4) => {
  const out = [];
  pts.forEach(([x, y], i) => {
    out.push([x, y]);
    const next = pts[i + 1];
    if (!next) return;
    const dx = next[0] - x, dy = next[1] - y, len = Math.hypot(dx, dy);
    const n = Math.floor(len / 7);
    for (let k = 1; k < n; k++) {
      const t = k / n, a = noise(x * 3 + y * 7 + k * 13) * amp;
      out.push([x + dx * t - (dy / len) * a, y + dy * t + (dx / len) * a]);
    }
  });
  return out.map(([x, y]) => `${x.toFixed(1)},${y.toFixed(1)}`).join(" ");
};

const COAST = [
  ...shift(660, 210, "47,403 75,390 80,375 72,345 65,325 68,315 82,318 100,308 118,300 130,305 140,300 142,285 150,278 165,282 180,277 205,285 240,283 252,275 255,262 250,250 238,240 232,228 235,216 258,228 275,240 288,240 296,228 283,214 280,208 300,210 325,192 330,175 330,163 355,167 365,178 385,182 398,187 395,172 405,182 420,188 430,182 428,172 420,168 435,158 440,168 445,180 460,185 472,178 478,160 485,150 470,145 462,130 460,108 478,112 492,125 498,145 520,148 530,155 535,150 560,150 575,152 580,142 567,135 575,125 585,140 600,135 612,140 625,150 640,145 655,148 665,135 685,128 690,115 680,100 673,75 677,55 683,70 695,80 700,95 715,100 728,98 735,85 730,60 735,42 750,50 758,70 760,95"),
  ...shift(900, 180, "45,190 58,195 68,188 66,160 78,155 80,170 88,182 98,178 95,150 105,160 112,152 125,158 135,168 140,178 185,175 205,192 225,195 245,200 255,212 275,208 285,205 288,192 305,197 325,205 345,222 365,235 380,248 400,258 465,253 530,243 560,250 600,258 637,255 642,262 650,270 665,266 695,262 710,250 720,235 728,220 740,230 755,240 765,252 778,262 783,275 778,288 765,290 760,310 745,322 730,325 720,335 700,350 692,362 692,390 680,405 670,425 665,450 658,485 652,508 620,502 595,501 570,503 545,506 520,512 500,518 485,525 460,540 440,560 427,572 420,585 415,600 415,620 418,640 428,652 445,660 465,680 480,700 490,735 502,760 508,800 515,835"),
  ...shift(900, 400, "517,205 535,208 555,212 575,228 582,235 573,232 570,245 577,262 585,285 592,300 597,325 605,345 615,365 622,385 632,385 640,400 640,420 648,440 652,468 655,440 662,432 668,455 660,470 670,485 690,498 713,500 714,520 705,538 690,537 665,537 632,545 625,560 620,575 628,595 625,615 600,620 585,630 580,642 590,655 588,675 572,690 568,705 577,730 560,725 530,712 500,708 475,690 450,682 435,672 420,690 400,700 388,715 378,705 360,715 345,730 340,748 325,735 310,745 300,730 297,712 260,708 232,695 222,675 205,650 200,630 180,612 165,602 147,600 157,552 130,548 100,553 80,545 68,520 50,515 40,523 20,508 5,500"),
  ...shift(680, 400, "668,485 640,487 620,470 620,455 595,450 580,430 570,422 563,433 575,455 572,473 555,470 548,450 545,420 520,425 500,432 490,455 480,465 455,470 425,487 410,480 395,490 380,500 355,502 345,495 325,505 308,520 307,545 293,551 275,547 285,515 292,480 305,450 312,425 307,400 312,375 305,345 315,320 335,310 345,290 342,275 325,255 305,245 280,242 258,245 252,265 250,305 225,315 210,320 200,335 198,350 195,330 180,310 175,295 160,285 145,280 130,275 115,262 108,270 90,272 78,265 75,245 65,220 55,200 65,185 60,165 45,155 30,145 20,135 8,130 12,110 15,95 8,75 8,50 15,45 22,38 40,35 60,30 98,27 75,8"),
  ...shift(660, 210, "130,580 100,577 55,582 65,560 72,540 60,520 52,500 45,490 70,478 90,475 85,460 92,450 105,462 118,462 105,448 90,450 75,465 55,455 42,435 47,403"),
];

const ISLANDS = [
  [490, 320, "128,148 140,143 160,147 180,145 200,142 220,143 235,150 245,138 235,122 248,132 250,120 258,132 262,115 265,98 278,102 285,95 297,92 298,60 312,66 330,68 328,105 345,112 370,115 380,108 400,128 412,150 432,168 425,170 435,185 440,210 420,212 412,220 400,210 375,218 350,225 345,240 335,240 330,262 318,290 300,297 270,297 258,280 262,262 255,250 258,215 248,190 235,172 215,178 205,175 190,180 165,178 155,168 130,152 128,148"],
  [490, 320, "195,368 240,362 262,358 275,340 282,325 290,338 300,358 315,362 328,352 340,366 348,345 360,340 410,342 430,355 455,375 462,385 465,402 490,415 515,432 515,455 505,442 495,455 485,440 470,435 462,455 445,465 440,480 425,492 405,485 402,505 398,525 375,528 360,548 330,543 325,560 335,578 320,575 305,562 300,575 285,578 285,592 275,565 262,575 245,572 215,577 200,582 185,600 180,635 175,655 160,690 160,715 140,735 112,760 100,750 92,720 105,705 115,675 135,655 140,665 152,665 160,645 170,625 165,610 140,605 120,595 115,570 100,560 75,552 60,540 50,520 65,515 60,500 72,520 85,520 75,500 95,500 88,480 105,485 95,470 85,440 60,418 58,405 78,418 80,395 110,402 118,420 125,450 135,458 140,450 145,420 152,408 172,398 170,382 180,382 182,412 200,415 203,395 195,390 198,368"],
  [490, 320, "445,350 430,340 425,328 445,342 462,340 465,312 480,303 505,315 530,330 528,345 540,370 545,390 520,392 500,402 480,385 465,375 455,362 445,350"],
  [490, 320, "460,98 475,87 495,95 510,102 515,92 525,92 540,110 540,128 520,125 515,132 500,130 480,138 470,120 460,98"],
  [490, 320, "350,222 362,232 378,225 385,238 368,245 352,238 350,222"],
  [490, 320, "45,470 60,475 78,485 72,492 85,512 70,510 60,488 45,470"],
  [490, 320, "480,818 490,815 500,830 498,842 482,835 480,818"],
  [490, 320, "720,625 738,620 735,640 728,655 718,640 720,625"],
  [490, 320, "248,620 258,615 262,603 264,615 275,622 262,628 260,640 258,626 248,620"],
  [660, 210, "367,105 375,85 392,122 378,124 367,105"],
  [660, 210, "183,240 195,238 208,262 195,258 183,240"],
  [660, 210, "200,238 215,232 222,250 210,260 200,238"],
  [660, 210, "25,265 35,268 47,275 42,282 25,265"],
  [660, 210, "510,60 528,65 532,75 515,72 510,60"],
  [660, 210, "585,98 600,100 592,106 585,98"],
  [900, 400, "588,218 602,212 608,225 595,230 588,218"],
];

const SPECKS = [
  [490, 320, "385,62 410,97 422,125 426,124 450,130 398,115 403,120 407,126 440,175 458,165 445,155 462,215 438,230 445,262 448,256 462,268 475,265 432,240 420,232 416,226 408,140 414,158 420,163 548,145 540,155 535,175 540,195 536,208 540,211 545,210 560,218 570,225 578,230 520,262 527,252 560,255 549,305 548,318 554,335 555,388 535,402 535,420 578,358 582,370 585,372 592,376 600,380 604,388 610,395 622,402 628,408 630,430 625,445 272,314 278,320 350,615 355,617 276,650 408,532 38,505 35,512 40,498 95,488 100,480 655,508 660,510 664,506 668,510 675,508 700,597 706,595 718,608 712,622 742,608 730,545 735,540 770,590 505,450 498,450 490,452 515,448 500,445 110,762 110,768 655,512 600,125 606,118 612,120 616,126 620,130 605,132 595,140 510,140 505,150 500,145 515,140 362,220 380,212 355,236 348,230 390,225 405,218 240,130 246,124 268,98 284,582 286,590 302,565 325,572 408,488 466,445 468,434"],
  [660, 210, "153,240 530,27 513,60 520,64 524,78 530,70 550,85 565,88 590,100 606,118 606,130 621,75 621,85 618,128 610,130 637,133 765,33 770,36 5,425 20,430 40,438 8,440 458,92 442,88 525,160 515,172 530,178 512,160"],
  [900, 180, "210,36 42,121 47,126 257,118 267,130 257,198 518,270 522,276 587,287 20,185 15,175 22,182 48,183 340,215 665,440 660,480 668,425 658,495 495,285 498,290 490,300"],
  [680, 400, "128,356 135,354 150,366 225,366 175,368 140,384 518,375 520,382 518,368 85,268 90,272 95,270 103,268 15,135 20,140 60,165 58,175 60,205 308,410 380,495 430,484 197,345"],
  [900, 400, "149,343 630,380 650,455 655,462 648,450 388,708 385,715 268,102 262,96 155,390 85,412"],
];

const BORDERS = [
  [660, 210, [
    "140,300 145,315 160,325 175,345 195,362 240,368 250,370 262,355 275,345 275,320 300,318 325,310 345,295 355,270 355,262 350,240 335,225 318,215 315,203",
    "325,257 340,255 355,265 338,268 325,257", "355,262 370,255 378,235 362,220 365,203 385,200 400,215 412,235",
    "412,235 400,255 390,270 385,283 410,288 422,298 425,312 405,322 398,340 390,360 397,385", "412,235 428,228 445,230", "422,313 445,318 470,315 495,308 500,303",
    "498,305 500,345 525,355 540,375 565,382 585,392 590,412 610,425 628,445", "500,345 480,352 470,368 440,375 420,387 397,388 360,390 335,395 325,415 315,418 310,440 290,430 270,432",
    "250,370 262,385 258,398 270,410 270,432 250,455 250,470 262,490 265,520 280,540 262,560 270,580 250,590 245,600",
    "155,585 180,590 205,590 220,605 232,613 245,600 265,598 270,612 262,628 280,637 305,640 340,648 365,630 380,605 400,610 432,597",
    "397,388 390,405 400,430 395,455 405,500 415,530 440,545 440,570 432,597", "440,552 468,560 470,500 462,478 468,465 488,462 492,440 510,432 525,438 535,465 550,480 555,490 548,520 555,555 548,600 550,608",
    "432,597 465,602 500,595 505,620 512,640 530,620 550,608 590,607 628,618 620,645 612,667", "550,490 570,480 590,485 610,495 625,485 622,460 628,445 655,435",
    "655,435 675,438 685,465 690,490 695,545 718,553", "500,303 515,300 560,300 600,297 625,298 640,320 660,325 668,345 668,365 670,385 655,395 655,435",
    "450,240 460,270 470,292 500,300", "515,200 525,225 532,250 550,262 560,275 560,298", "500,255 515,280 515,300", "498,190 520,200 540,205 560,210 580,218 590,215 610,203",
    "600,140 610,160 605,180 612,200 650,200 680,208 710,200 735,208 745,230 770,262", "590,215 605,225 620,235 610,250 580,245 590,258 610,265 600,280 600,297", "610,250 625,265 645,260 665,280 690,283",
    "675,280 690,305 680,330 668,350", "690,283 710,290 735,280 760,270 775,262", "690,283 705,300 720,308 740,306 760,320 780,308", "670,385 690,390 715,402 725,412 745,395 750,388 780,400",
    "718,553 730,580 750,605 762,630", "612,667 650,672 690,665 730,655 755,635 780,625", "305,640 315,655 302,665 320,700 330,735",
    "612,667 605,690 600,705 570,730 560,710 530,715 510,715 490,700 480,717 470,705 450,700 430,685 400,695 385,715 378,733 330,735 295,757 260,745 235,733 210,742 215,790 185,800 190,825 170,835",
    "350,735 360,765 365,795 400,805 408,820 455,795 470,800 530,795", "570,730 540,745 535,790 528,840", "498,148 510,155 500,170 515,182 530,175 533,155",
  ]],
  [680, 400, [
    "348,250 355,262 355,295 370,300 350,310 350,365 365,400 380,430 388,432 388,480 380,500", "360,300 380,290 382,272 400,265 430,262 468,270 495,278 520,280 535,295 560,303 600,298",
    "345,235 342,258 350,262", "560,303 555,330 555,350 528,352 525,370 515,375 520,390 498,402 498,418 485,425 490,450",
    "605,298 590,285 580,255 572,235 600,240 620,240 620,200 660,190 690,185 700,190 728,180 728,165 720,140 735,120 715,108", "715,108 708,100 718,85 715,60 705,60",
    "650,255 655,243 665,238 674,245 672,252 662,255 660,268 650,262 650,255", "605,298 620,312 645,300 655,340 690,345 690,375 705,385 718,420", "718,420 705,445 675,450 678,470 668,490",
  ]],
  [900, 180, [
    "60,195 50,210 60,232 80,240 100,248 115,245 120,235 138,238 130,255 145,275 175,290 185,295", "62,232 65,260 78,270 75,295 88,315 95,360", "0,292 20,300 30,325 50,350 95,360 120,352 135,365 165,375 205,375",
    "0,375 15,365 35,360 50,350", "165,375 180,355 185,330 180,300 185,290 215,285 225,280 220,260 230,245 222,235 222,215 252,210", "230,245 255,250 280,262 300,275 310,295 330,293 338,272 365,280 395,280 400,258",
    "208,375 222,340 218,310 235,325 235,310 250,315 262,335 275,312 300,310 310,295 330,293", "235,310 225,306 213,310 218,328 230,325", "330,293 328,305 358,315 340,345 348,375 370,370 378,385 400,400 402,420 405,432 370,440 365,455 368,495",
    "402,420 430,425 455,430 468,412 487,380 465,365 455,340 468,330 465,295 480,290 475,265 465,253", "468,330 485,318 500,320 505,310 498,295 485,290", "478,270 500,265 505,278 490,285",
    "500,320 520,330 540,325 550,345 565,330 562,318 545,325 532,310 540,302 550,305 552,320 570,320 565,280 550,268 530,282 505,290", "570,320 585,310 583,300 600,320 605,335 628,348", "632,262 628,275 640,275 655,272",
    "628,275 618,300 630,310 622,330 632,370 692,365", "765,290 740,285 728,300 735,322", "755,245 762,265 745,270 745,290", "722,250 732,235 740,248 730,254 722,250",
    "368,495 365,515 360,535 335,540 303,550", "335,540 350,565 350,598 375,605 385,618 370,640 345,650 335,665 335,690 352,710 355,728", "368,495 390,478 405,475 412,495 440,508 450,510 468,528",
    "205,405 245,400 252,430 265,448 250,460 255,490 270,512 285,530 303,550 268,560 258,590 235,595 218,572 200,580 165,590", "205,375 208,405 180,410 178,435 155,450 155,478 125,492",
    "125,492 95,487 102,460 118,430 118,415 90,408 65,410 45,400 20,402 10,410 0,400", "125,492 140,515 165,545 168,590 158,610 162,622", "162,622 135,628 110,635 108,658 100,672 75,672 55,700 55,715 40,718",
    "162,622 180,640 195,660 208,680 210,710 195,740 215,750 220,720 245,740 262,760", "55,715 55,740 48,768 75,768", "355,728 375,732 390,738 405,738 418,700 408,668 428,655", "0,505 20,482 55,488 58,510 70,525 45,545 45,560 18,570 25,578 50,575 45,605 20,625 0,635",
  ]],
  [900, 400, [
    "48,102 75,105 105,110 130,135 135,150 160,165 175,178 245,140 250,155 258,130 245,115 262,98 305,105 330,100 330,80 355,68", "390,75 380,105 385,130 390,165 445,170 445,185", "175,178 185,205 180,222 172,232",
    "185,208 215,203 245,215 285,215 290,205 310,185 335,192 350,210 375,220 380,205 405,205 410,195 425,205 428,190 445,185 455,200 480,195 485,215 505,205 517,205", "375,220 378,250 395,250 430,230 485,220",
    "285,215 288,235 275,258 275,285 265,300 268,340 262,375", "275,258 310,255 330,240 335,235 345,250 375,252", "310,255 330,280 325,320 300,330 295,355", "375,252 368,265 370,285 395,300 390,320 402,325 408,310 430,310 440,305 455,305 460,292 470,305 480,292 520,298 545,302",
    "517,205 545,225 557,250 555,290 545,302 548,345 540,380 535,410 520,420 515,445 500,460 490,480", "262,375 300,362 320,368 325,385 340,378 342,350 370,350 398,345 405,325", "398,345 410,365 430,378 430,420 435,455 430,480 420,500",
    "325,385 315,410 320,440 320,485", "262,375 240,395 210,415 190,420 175,440", "175,440 165,430 152,410 155,385", "175,440 185,460 205,462 212,520 262,535 262,500 290,490 320,485 340,495 375,500 420,500 440,492 450,500 478,505 490,480 530,500 570,500 575,480 595,468 620,475 632,500",
    "185,460 170,480 152,488 165,525 157,552", "632,500 635,540 600,542 570,550 575,600 580,640", "595,468 600,430 620,395", "355,500 345,515 340,550 350,580 385,570 410,552 425,580 440,592 495,595 505,620 510,650 550,635 580,640 560,655 568,675 572,690",
    "385,570 380,600 360,630 300,648 288,655 298,680 290,690 297,712", "262,535 275,555 278,580 295,590 295,630 300,648", "442,537 455,535 472,550 458,562 455,552 445,550 442,537", "60,420 85,412 90,378 105,400 120,402 150,390",
  ]],
];

const LAKE = shift(900, 400, "118,228 140,220 165,225 178,235 175,265 175,310 168,335 160,365 158,392 150,380 145,350 128,320 120,300 105,285 105,265 120,255 118,228");
const SELECTED = "395,172 405,182 420,188 430,182 428,172 420,168 435,158 440,168 445,182 465,182 476,170 478,153 495,155 500,187 470,196 452,205 445,230 430,226 412,232 408,200 400,190 395,172";

function MapCanvas() {
  return (
    <main className="flex-1 overflow-hidden border-l border-[#b4b4b4]">
      <svg className="block" width="1072" height="789" viewBox="1443 384 3216 2367">
        <g fill="#7c898c" stroke="#232323" strokeWidth="3.8" strokeLinejoin="round">
          <polygon points={rough(COAST, 6)} />
          {ISLANDS.map(([ox, oy, s]) => <polygon key={s} points={rough(shift(ox, oy, s), 6)} />)}
          <g fill="none">
            {BORDERS.map(([ox, oy, list]) => list.map((s) => <polyline key={`${ox}${s}`} points={rough(shift(ox, oy, s), 5)} />))}
          </g>
          <polygon points={rough(LAKE, 3)} fill="#fff" />
          {SPECKS.map(([ox, oy, s]) => shift(ox, oy, s).map(([x, y], i) => <path key={`${x}-${y}-${i}`} strokeWidth="3" d={`M${x - 2} ${y - 2}l4 1l-1 4l-3 -1z`} />))}
          <polygon points={rough(shift(660, 210, SELECTED), 3)} fill="#ffff00" strokeWidth="2" stroke="#55551a" />
          <circle cx="2431" cy="729" r="5" fill="#ffff00" strokeWidth="2" stroke="#77771a" />
        </g>
        <g transform="translate(1980 630)">
          <rect x="441" y="198" width="60" height="40" fill="none" stroke="#fff" strokeWidth="3" />
          <rect x="441" y="198" width="60" height="40" fill="none" stroke="#000" strokeWidth="3" strokeDasharray="3 3" />
          <path d="M445 202L457 251L468 242L486 263L499 251L482 234L496 226Z" fill="#000" stroke="#fff" strokeWidth="2.5" strokeLinejoin="round" />
        </g>
      </svg>
    </main>
  );
}

/* ---------- window ---------- */

const MENU = [
  ["", "Project", "", "w-[77px]"], ["E", "dit", "", "w-[49px]"], ["V", "iew", "", "w-[58px]"], ["L", "ayer", "", "w-[64px]"], ["S", "ettings", "", "w-[87px]"],
  ["P", "lugins", "", "w-[78px]"], ["o", "r", "Vect", "w-[72px]"], ["R", "aster", "", "w-[72px]"], ["D", "atabase", "", "w-[100px]"], ["W", "eb", "", "w-[55px]"],
  ["M", "esh", "", "w-[61px]"], ["c", "essing", "Pro", "w-[109px]"], ["H", "elp", "", "w-[60px]"],
];

export default function App() {
  return (
    <div className="flex h-[917px] w-[1553px] flex-col overflow-hidden border-l border-t border-[#a6a6a6] bg-[#fcfcfc] text-black">
      <nav className={`flex h-[32px] shrink-0 items-center border-b border-[#d4d4d4] pl-[4px] pt-[4px] text-[20px] ${TREE_FONT}`}>
        {MENU.map(([key, rest, pre, w]) => (
          <span key={pre + key + rest} className={`shrink-0 whitespace-nowrap ${w}`}>
            {pre}<span className="underline decoration-1 underline-offset-[3px]">{key}</span>{rest}
          </span>
        ))}
      </nav>
      <FileToolbar />
      <EditToolbar />
      <div className="flex min-h-0 flex-1">
        <SideToolbar />
        <div className="flex w-[416px] shrink-0 flex-col">
          <BrowserDock />
          <LayersDock />
        </div>
        <div className="flex w-[7px] shrink-0 items-start pt-[404px]">
          <svg className="ml-[3px] block" width="5" height="18" viewBox="0 0 15 54"><Dots x={0} y={0} cols={2} rows={6} /></svg>
        </div>
        <MapCanvas />
      </div>
    </div>
  );
}
